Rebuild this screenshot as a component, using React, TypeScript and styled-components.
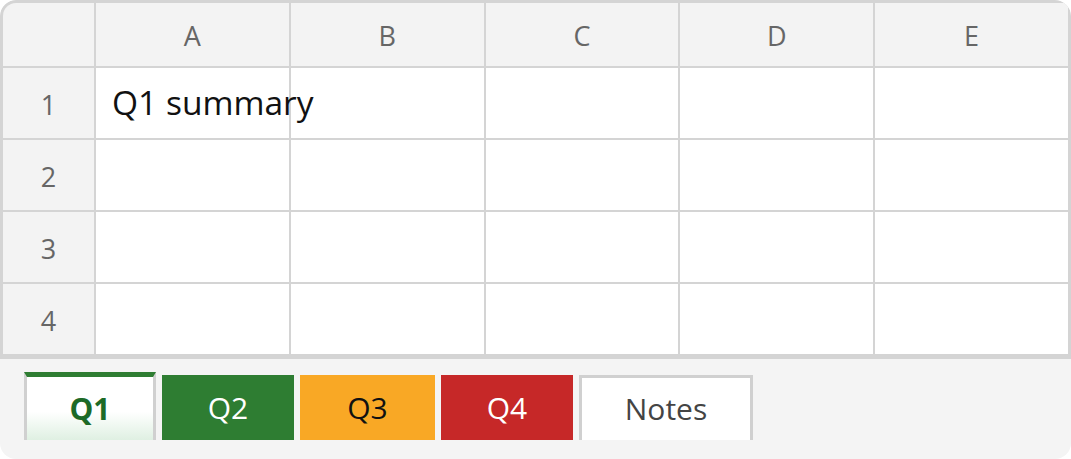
import React from "react";
import styled, { createGlobalStyle } from "styled-components";

const GlobalStyle = createGlobalStyle`
  html, body {
    margin: 0;
    padding: 0;
    background: #ffffff;
  }
  body {
    font-family: "Open Sans", "Noto Sans", "Liberation Sans", sans-serif;
  }
`;

const Frame = styled.div`
  width: 1071px;
  height: 459px;
  box-sizing: border-box;
  display: flex;
  flex-direction: column;
  border-radius: 16px;
  overflow: hidden;
  background: #f4f4f4;
`;

const Sheet = styled.div`
  display: grid;
  grid-template-columns: 91px repeat(5, minmax(0, 1fr));
  grid-template-rows: 63px repeat(4, 70px);
  gap: 2px;
  background: #d4d4d4;
  border: 3px solid #d4d4d4;
  border-bottom-width: 5px;
  border-radius: 16px 16px 0 0;
`;

const Cell = styled.div<{ $head?: boolean; $spill?: boolean }>`
  min-width: 0;
  background: ${(p) => (p.$head ? "#f3f3f3" : "#ffffff")};
  color: ${(p) => (p.$head ? "#666666" : "#111111")};
  font-size: ${(p) => (p.$head ? "27px" : "33.5px")};
  display: flex;
  align-items: center;
  justify-content: ${(p) => (p.$head ? "center" : "flex-start")};
  padding: ${(p) => (p.$head ? "2px 0 0" : "0 0 2px 16px")};
  white-space: nowrap;
  overflow: visible;
  position: relative;
  z-index: ${(p) => (p.$spill ? 1 : 0)};

  &:first-child {
    border-top-left-radius: 13px;
  }
`;

const TabBar = styled.div`
  flex: 1;
  display: flex;
  align-items: flex-end;
  gap: 6px;
  padding: 0 0 19px 24px;
`;

type Tone = "active" | "green" | "amber" | "red" | "plain";

const tones: Record<Tone, { bg: string; fg: string }> = {
  active: { bg: "linear-gradient(#ffffff 55%, #dff0e2)", fg: "#1d6a27" },
  green: { bg: "#2e7d32", fg: "#ffffff" },
  amber: { bg: "#f9a825", fg: "#111111" },
  red: { bg: "#c62828", fg: "#ffffff" },
  plain: { bg: "#ffffff", fg: "#444444" },
};

const Tab = styled.div<{ $tone: Tone; $width: number }>`
  box-sizing: border-box;
  width: ${(p) => p.$width}px;
  height: ${(p) => (p.$tone === "active" ? "68px" : "65px")};
  display: flex;
  align-items: center;
  justify-content: center;
  padding-bottom: 1px;
  background: ${(p) => tones[p.$tone].bg};
  color: ${(p) => tones[p.$tone].fg};
  font-size: 30px;
  font-weight: ${(p) => (p.$tone === "active" ? 700 : 400)};
  border: ${(p) =>
    p.$tone === "active" || p.$tone === "plain" ? "3px solid #d0d0d0" : "none"};
  border-bottom: none;
  border-top-color: ${(p) => (p.$tone === "active" ? "#2e7d32" : "#d0d0d0")};
  border-top-width: ${(p) => (p.$tone === "active" ? "5px" : "3px")};
`;

const columns = ["A", "B", "C", "D", "E"];
const rows = [1, 2, 3, 4];

const tabs: { label: string; tone: Tone; width: number }[] = [
  { label: "Q1", tone: "active", width: 132 },
  { label: "Q2", tone: "green", width: 132 },
  { label: "Q3", tone: "amber", width: 135 },
  { label: "Q4", tone: "red", width: 132 },
  { label: "Notes", tone: "plain", width: 174 },
];

export default function App() {
  return (
    <>
      <GlobalStyle />
      <Frame>
        <Sheet>
          <Cell $head />
          {columns.map((c) => (
            <Cell $head key={c}>
              {c}
            </Cell>
          ))}
          {rows.map((r) => (
            <React.Fragment key={r}>
              <Cell $head>{r}</Cell>
              {columns.map((c) => {
                const text = r === 1 && c === "A" ? "Q1 summary" : null;
                return (
                  <Cell key={c} $spill={!!text}>
                    {text}
                  </Cell>
                );
              })}
            </React.Fragment>
          ))}
        </Sheet>
        <TabBar>
          {tabs.map((t) => (
            <Tab key={t.label} $tone={t.tone} $width={t.width}>
              {t.label}
            </Tab>
          ))}
        </TabBar>
      </Frame>
    </>
  );
}
